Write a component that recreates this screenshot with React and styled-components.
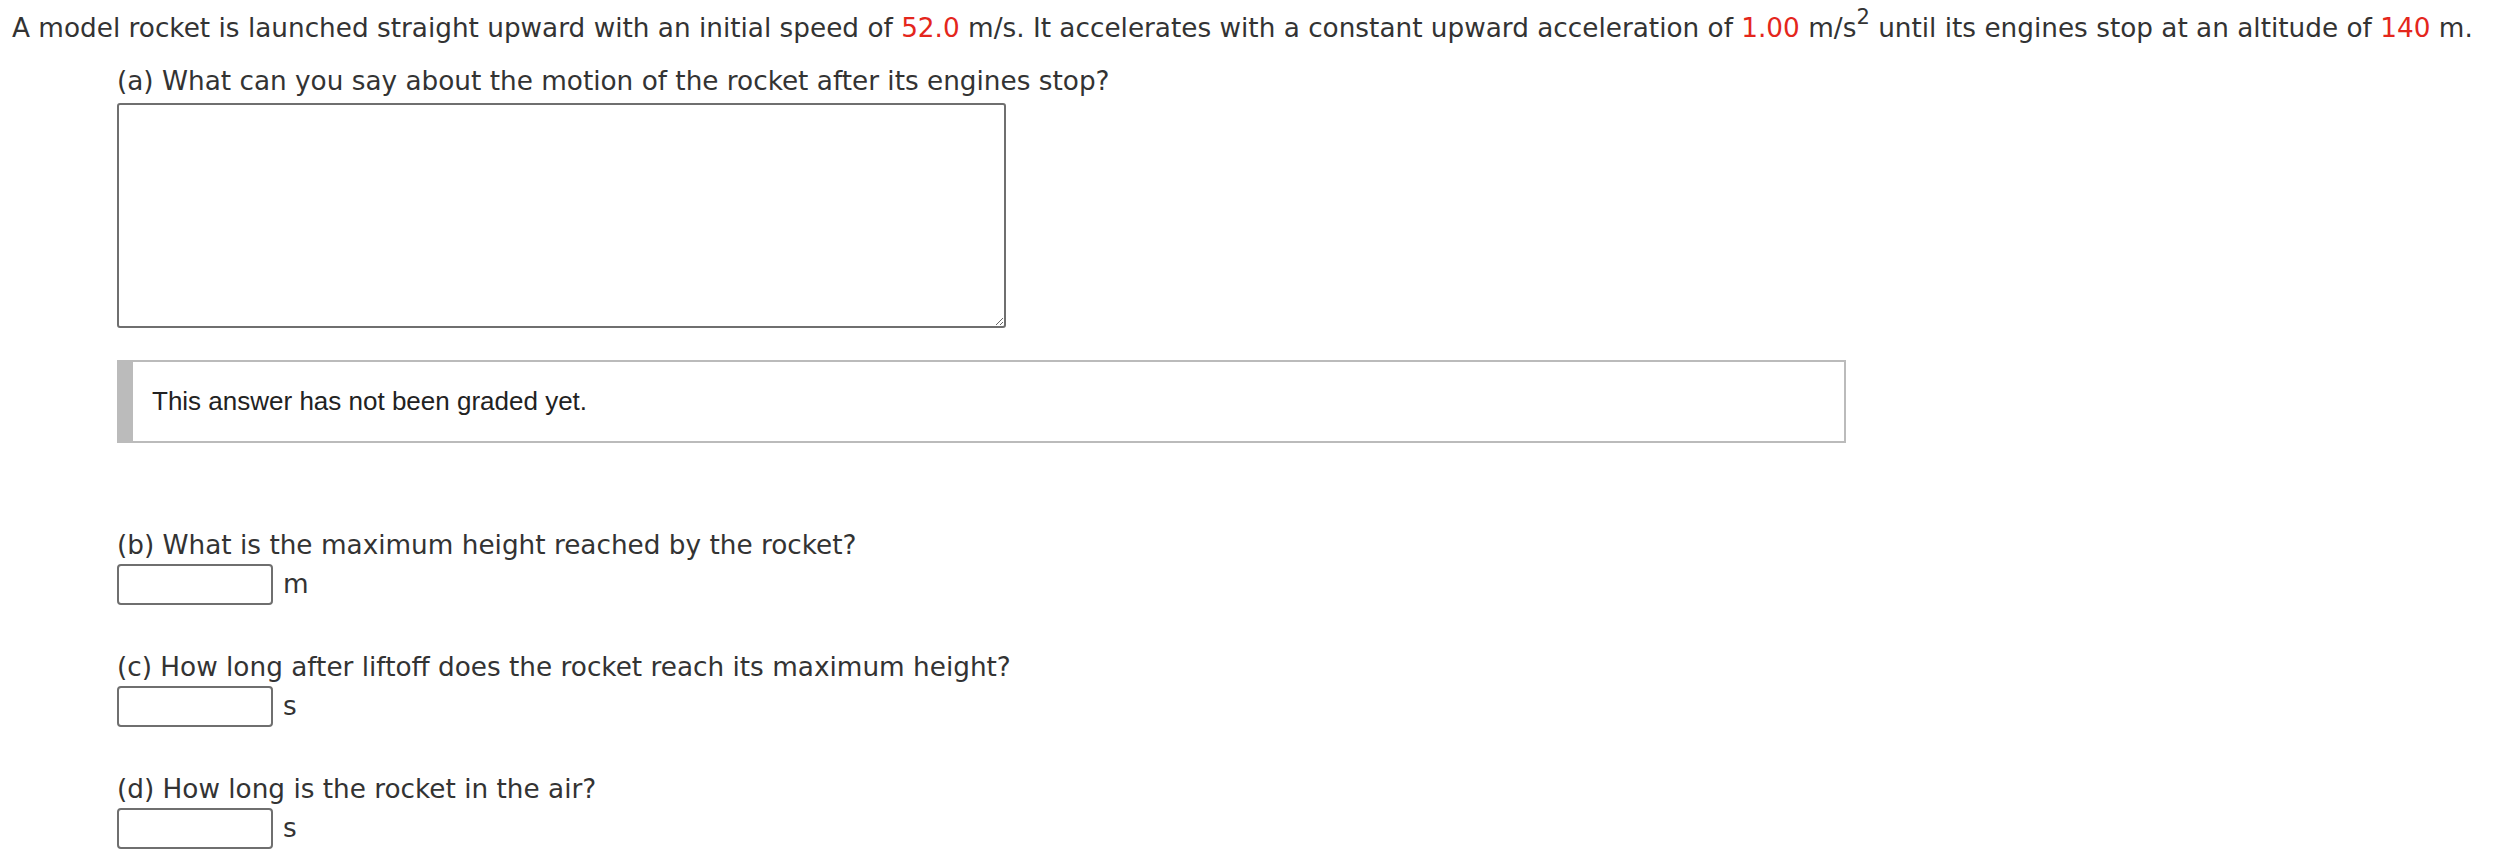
import React from "react";
import styled, { createGlobalStyle } from "styled-components";

const Global = createGlobalStyle`
  html, body { margin: 0; padding: 0; background: #fff; }
  body { font-family: "DejaVu Sans", Verdana, sans-serif; color: #333; }
`;

const Page = styled.div`
  padding: 8px 0 0 12px;
  font-size: 26.3px;
`;

const Intro = styled.p`
  margin: 0;
  line-height: 41px;
  white-space: nowrap;
`;

const Num = styled.span`
  color: #e4261c;
`;

const Sup = styled.sup`
  font-size: 0.8em;
  line-height: 0;
  vertical-align: 0.62em;
`;

const Parts = styled.div`
  margin-left: 105px;
  display: flex;
  flex-direction: column;
`;

const Label = styled.div`
  line-height: ${(p) => p.$lh || 40}px;
  margin-top: ${(p) => p.$mt || 0}px;
  white-space: nowrap;
`;

const TextArea = styled.textarea`
  box-sizing: border-box;
  display: block;
  width: 889px;
  height: 225px;
  border: 2px solid #6f6f6f;
  border-radius: 3px;
  margin: 1px 0 0;
  padding: 4px;
  font: inherit;
  background: #fff;
`;

const Feedback = styled.div`
  box-sizing: border-box;
  width: 1729px;
  height: 83px;
  margin-top: 32px;
  border: 2px solid #bbb;
  border-left: 16px solid #bbb;
  display: flex;
  align-items: center;
  padding-left: 19px;
  font-family: "Liberation Sans", Arial, sans-serif;
  font-size: 26px;
  color: #222;
`;

const AnswerRow = styled.div`
  display: flex;
  align-items: center;
  gap: 10px;
  margin-top: ${(p) => p.$mt || 0}px;
`;

const Input = styled.input`
  box-sizing: border-box;
  width: 156px;
  height: 41px;
  border: 2px solid #6f6f6f;
  border-radius: 4px;
  background: #fff;
  margin: 0;
  padding: 2px 6px;
  font: inherit;
`;

const Unit = styled.span`
  line-height: 41px;
`;

const questions = [
  { label: "(b) What is the maximum height reached by the rocket?", unit: "m", mt: 82 },
  { label: "(c) How long after liftoff does the rocket reach its maximum height?", unit: "s", mt: 42 },
  { label: "(d) How long is the rocket in the air?", unit: "s", mt: 42 },
];

export default function App() {
  return (
    <>
      <Global />
      <Page>
        <Intro>
          A model rocket is launched straight upward with an initial speed of <Num>52.0</Num> m/s. It
          accelerates with a constant upward acceleration of <Num>1.00</Num> m/s<Sup>2</Sup> until its
          engines stop at an altitude of <Num>140</Num> m.
        </Intro>
        <Parts>
          <Label $mt={12} $lh={41}>(a) What can you say about the motion of the rocket after its engines stop?</Label>
          <TextArea />
          <Feedback>This answer has not been graded yet.</Feedback>
          {questions.map((q) => (
            <React.Fragment key={q.label}>
              <Label $mt={q.mt}>{q.label}</Label>
              <AnswerRow $mt={-1}>
                <Input type="text" />
                <Unit>{q.unit}</Unit>
              </AnswerRow>
            </React.Fragment>
          ))}
        </Parts>
      </Page>
    </>
  );
}
